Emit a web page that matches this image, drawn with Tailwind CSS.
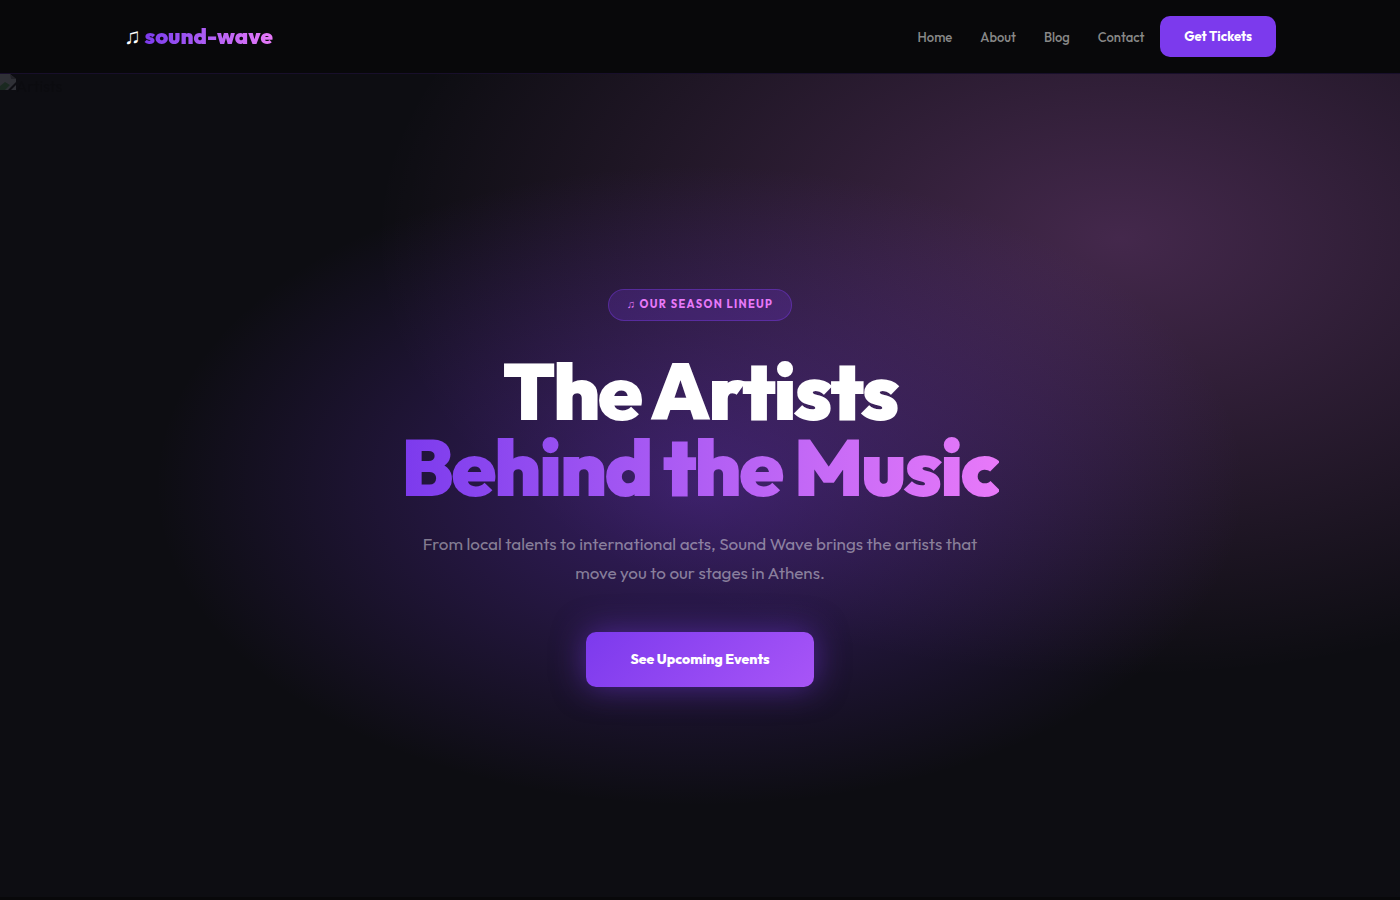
<!DOCTYPE html>
<html lang="en">
<head>
  <meta charset="UTF-8" />
  <meta name="viewport" content="width=device-width, initial-scale=1.0"/>
  <title>Artists | sound-wave</title>
  <script src="https://cdn.jsdelivr.net/npm/@tailwindcss/browser@4"></script>
</head>
<body class="bg-[#08080a] text-white font-['Outfit',sans-serif] min-h-screen">

  <!-- Navbar -->
  <header class="bg-[#08080a] border-b border-[#7c3aed]/15">
    <nav class="max-w-[1152px] mx-auto h-[73px] flex items-center justify-between">
      <a href="#" class="pb-0.5 text-[22px] leading-7 font-black">
        ♫ <span class="bg-gradient-to-r from-[#7c3aed] to-[#e879f9] bg-clip-text text-transparent">sound-wave</span>
      </a>
      <div class="flex items-center gap-4">
        <div class="pt-0.5 flex items-center gap-7 text-[13px] text-[#888888] font-medium">
          <a href="#" class="hover:text-white">Home</a>
          <a href="#" class="hover:text-white">About</a>
          <a href="#" class="hover:text-white">Blog</a>
          <a href="#" class="hover:text-white">Contact</a>
        </div>
        <a href="#" class="bg-[#7c3aed] rounded-[10px] px-6 h-[41px] flex items-center text-[13px] font-bold">Get Tickets</a>
      </div>
    </nav>
  </header>

  <!-- Hero -->
  <section class="relative min-h-[823px] pt-[5px] flex items-center justify-center text-center bg-[#0d0d12] bg-[radial-gradient(ellipse_at_50%_50%,rgba(124,58,237,0.38)_0%,transparent_55%),radial-gradient(ellipse_at_80%_20%,rgba(232,121,249,0.25)_0%,transparent_47%)]">
    <div class="absolute top-0 left-0 flex text-base text-black">
      <svg class="w-4 h-4 opacity-20" viewBox="0 0 16 16" aria-hidden="true">
        <path d="M0 0h10l6 5v3L8 16H0z" fill="#b9bcc8"/>
        <path d="M0 12l5-4 5 3-5 5H0z" fill="#4f9a58"/>
        <path d="M10 0l1 5h5z" fill="#77777f"/>
        <path d="M16 11v5h-5z" fill="#b9bcc8"/>
      </svg>
      <span class="opacity-15">Artists</span>
    </div>

    <div class="relative max-w-[700px] flex flex-col items-center">
      <span class="h-8 px-[18px] pb-0.5 flex items-center rounded-full border border-[#7c3aed]/40 bg-[#7c3aed]/20 text-[11px] font-bold tracking-[0.12em] text-[#e879f9]">♫ OUR SEASON LINEUP</span>
      <h1 class="mt-8 text-[80px] leading-[76px] font-black tracking-[-0.03em] whitespace-nowrap">
        The Artists<br>
        <span class="bg-gradient-to-r from-[#7c3aed] to-[#e879f9] bg-clip-text text-transparent">Behind the Music</span>
      </h1>
      <p class="mt-6 max-w-[580px] text-[17px] leading-[29px] text-white/45">From local talents to international acts, Sound Wave brings the artists that move you to our stages in Athens.</p>
      <a href="#" class="mt-[45px] h-[55px] px-11 pb-0.5 flex items-center rounded-[10px] bg-[linear-gradient(135deg,#7c3aed,#a855f7)] text-sm font-extrabold shadow-[0_0_32px_rgba(124,58,237,0.5)]">See Upcoming Events</a>
    </div>
  </section>

</body>
</html>
